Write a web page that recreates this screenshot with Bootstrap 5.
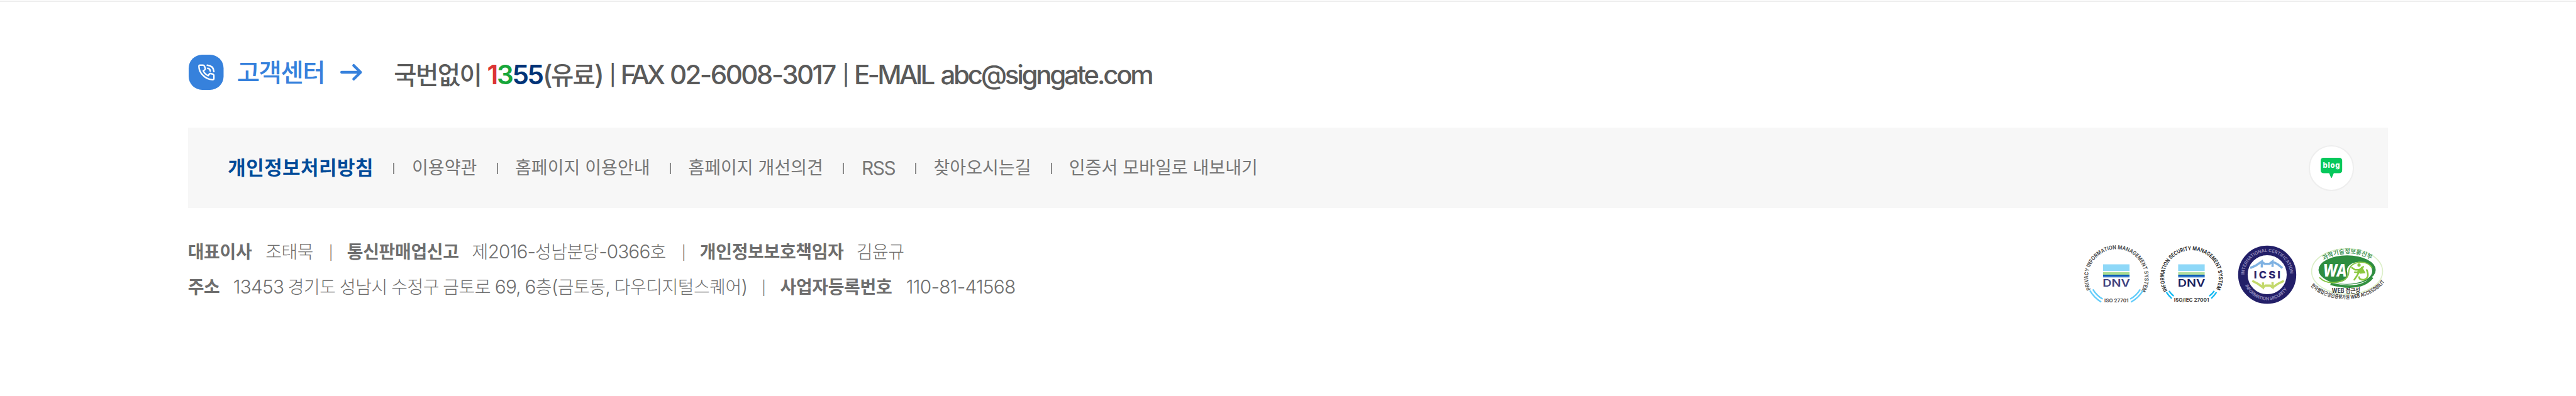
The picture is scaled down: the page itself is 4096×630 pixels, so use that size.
<!DOCTYPE html>
<html lang="ko">
<head>
<meta charset="utf-8">
<meta name="viewport" content="width=device-width, initial-scale=1">
<title>고객센터</title>
<link href="https://cdn.jsdelivr.net/npm/bootstrap@5.3.0/dist/css/bootstrap.min.css" rel="stylesheet">
<style>
body{font-family:Inter,"Noto Sans CJK KR",sans-serif;background:#fff;color:#767676;overflow:hidden}
svg{display:block;overflow:visible}
.topline{height:2px;margin-top:1px;background:#eee}
.inner{width:3498.6px;margin-left:298.7px}
/* customer centre */
.center-row{height:200.4px;padding-top:84px}
.tel-icon{width:55.5px;height:56px;margin-left:1.3px}
.center-title{width:164.3px;margin:-1.4px 0 0 21.3px;font-size:39.5px;font-weight:500;line-height:60px;letter-spacing:-1.5px;color:#3681dc}
.arrow{width:34.6px;height:26px;margin-top:14.9px}
.contact{display:grid;grid-template-columns:148.1px 88.5px 105.8px 18px 78.2px 274.5px 18.5px 137.5px 400px;align-items:baseline;margin:2.1px 0 0 50.7px;font-size:42.1px;font-weight:500;line-height:60px;color:#5a5a5a;white-space:nowrap}
.hangul{font-size:39.5px;letter-spacing:-1.65px}
.num{font-weight:600;letter-spacing:-2.3px}
.n-red{color:#dc3535}.n-green{color:#17a63a}.n-blue{color:#003478}
.paren{letter-spacing:-2.6px}
.fax{letter-spacing:-4.5px}
.faxno{letter-spacing:-2.6px}
.email-label{letter-spacing:-3.8px}
.email{letter-spacing:-3.3px}
.bar{font-size:32px;position:relative;top:-3px}
/* policy menu */
.policy{height:128px;background:#f7f7f7;padding:0 54px 0 63.5px}
.policy ul{grid-template-columns:263.3px 29.5px 135px 29px 246px 29.3px 246.2px 29.5px 85.5px 29px 187px 28.3px 320px;font-size:28.1px;color:#767676;white-space:nowrap}
.policy .main{font-size:31px;font-weight:700;letter-spacing:.45px;color:#004b99}
.policy .latin{font-size:29.8px;letter-spacing:-1.4px}
.tick{width:2px;height:18px;background:#8b8b8b;margin-top:1px}
.blog{width:72.3px;height:72.3px;border:2.1px solid #eee}
/* company details */
.company{margin-top:48.6px}
.info{display:grid;align-items:baseline;height:55.7px;font-size:29.8px;font-weight:300;letter-spacing:-.9px;line-height:40px;white-space:nowrap;word-spacing:-1px;color:#6e6e6e}
.info-1{grid-template-columns:123.5px 100.6px 29px 198.7px 333.2px 29.2px 249px 90px}
.info-2{grid-template-columns:72px 840.2px 29.6px 200.4px 200px;letter-spacing:-.75px}
.info b,.info i{font-size:28px;font-style:normal;letter-spacing:-.5px}
.info b{font-weight:700;letter-spacing:-.35px}
.info .sep{font-size:22px;position:relative;top:-1px}
.marks{margin:8.5px 4px 0 0}
</style>
<script src="https://cdn.jsdelivr.net/npm/bootstrap@5.3.0/dist/js/bootstrap.bundle.min.js"></script>
</head>
<body>
<div class="topline"></div>
<footer class="inner">
  <div class="center-row d-flex align-items-start">
    <svg class="tel-icon" viewBox="37 30 235 237"><rect x="37" y="30" width="235" height="237" rx="91" fill="#3681dc"/><g fill="none" stroke="#fff" stroke-width="10" stroke-linecap="round" stroke-linejoin="round"><path d="M112 101H134Q140 101 143 107L149 122Q150 128 145 132L135 139Q147 163 169 171L175 161Q179 156 185 157L202 162Q207 164 207 170V190Q207 199 197 199C145 195 107 151 106 110Q106 101 112 101Z"/><path d="M162 101Q203 103 207 144M165 122Q181 124 182 140"/></g></svg>
    <div class="center-title">고객센터</div>
    <svg class="arrow" viewBox="34 40 146 110"><path d="M43 95H170M124 49L171 95L124 141" fill="none" stroke="#3681dc" stroke-width="18" stroke-linecap="round" stroke-linejoin="round"/></svg>
    <div class="contact">
      <span class="hangul">국번없이</span>
      <span class="num"><span class="n-red">1</span><span class="n-green">3</span><span class="n-blue">55</span></span>
      <span class="paren">(<span class="hangul">유료</span>)</span>
      <span class="bar">|</span><span class="fax">FAX</span><span class="faxno">02-6008-3017</span>
      <span class="bar">|</span><span class="email-label">E-MAIL</span><span class="email">abc@signgate.com</span>
    </div>
  </div>
  <nav class="policy d-flex align-items-center justify-content-between">
    <ul class="d-grid align-items-center list-unstyled mb-0">
      <li class="main">개인정보처리방침</li><li class="tick"></li>
      <li>이용약관</li><li class="tick"></li>
      <li>홈페이지 이용안내</li><li class="tick"></li>
      <li>홈페이지 개선의견</li><li class="tick"></li>
      <li class="latin">RSS</li><li class="tick"></li>
      <li>찾아오시는길</li><li class="tick"></li>
      <li>인증서 모바일로 내보내기</li>
    </ul>
    <a class="blog rounded-circle bg-white d-flex justify-content-center align-items-center" href="#" aria-label="blog">
      <svg width="34.2" height="32.3" viewBox="201 255 144 136"><path d="M221 255H325Q345 255 345 275V338Q345 358 325 358H289L276 388Q273 393 270 388L258 358H221Q201 358 201 338V275Q201 255 221 255Z" fill="#06c85b"/><text x="216" y="323" textLength="114" font-family="Inter,sans-serif" font-weight="800" font-size="48" fill="#fff">blog</text></svg>
    </a>
  </nav>
  <div class="company d-flex justify-content-between align-items-start">
    <div>
      <div class="info info-1"><b>대표이사</b><i>조태묵</i><span class="sep">|</span><b>통신판매업신고</b><span><i>제</i>2016-<i>성남분당</i>-0366<i>호</i></span><span class="sep">|</span><b>개인정보보호책임자</b><i>김윤규</i></div>
      <div class="info info-2"><b>주소</b><span>13453 <i>경기도 성남시 수정구 금토로</i> 69, 6<i>층</i>(<i>금토동</i>, <i>다우디지털스퀘어</i>)</span><span class="sep">|</span><b>사업자등록번호</b><span>110-81-41568</span></div>
    </div>
    <div class="marks d-flex">
      <svg width="120" height="96" viewBox="58 50 506 405" font-family="Inter,sans-serif">
        <path id="ring1" d="M102 356A190 190 0 1 1 446 356" fill="none"/>
        <text font-size="37" font-weight="700" fill="#555"><textPath href="#ring1" textLength="775" lengthAdjust="spacingAndGlyphs">PRIVACY INFORMATION MANAGEMENT SYSTEM</textPath></text>
        <path d="M96 363Q124 412 172 440M116 355Q142 398 182 420M452 363Q424 412 372 440M434 355Q408 398 366 420" fill="none" stroke="#64cdfa" stroke-width="10"/>
        <path fill="#8ed8f8" d="M184 187H362V231H184z"/><path fill="#a9dd92" d="M184 240H362V257H184z"/><path fill="#0b5bbb" d="M184 257H362V270H184z"/><path fill="#86ade0" d="M184 270H362V276H184z"/>
        <text x="181" y="338" font-size="66" font-weight="600" textLength="184" lengthAdjust="spacingAndGlyphs" fill="#40427f">DNV</text>
        <text x="193" y="444" font-size="34" font-weight="700" textLength="162" lengthAdjust="spacingAndGlyphs" fill="#555">ISO 27701</text>
      </svg>
      <svg width="124" height="96" viewBox="564 50 523 405" font-family="Inter,sans-serif">
        <path id="ring2" d="M617 364A183 183 0 1 1 940 360" fill="none"/>
        <text font-size="37" font-weight="700" fill="#333"><textPath href="#ring2" textLength="748" lengthAdjust="spacingAndGlyphs">INFORMATION SECURITY MANAGEMENT SYSTEM</textPath></text>
        <path d="M609 374Q624 397 645 416M627 366Q640 386 658 400M945 374Q930 397 910 416M930 366Q917 386 897 400" fill="none" stroke="#18baf2" stroke-width="10"/>
        <path fill="#8ed8f8" d="M688 187H866V231H688z"/><path fill="#b3dfa0" d="M688 240H866V257H688z"/><path fill="#0b5bbb" d="M688 257H866V270H688z"/><path fill="#649cd8" d="M688 270H866V276H688z"/>
        <text x="685" y="338" font-size="66" font-weight="600" textLength="184" lengthAdjust="spacingAndGlyphs" fill="#17205f">DNV</text>
        <text x="660" y="437" font-size="34" font-weight="700" textLength="235" lengthAdjust="spacingAndGlyphs" fill="#444">ISO/IEC 27001</text>
      </svg>
      <svg width="115.5" height="96" viewBox="70 50 487 405" font-family="Inter,sans-serif">
        <circle cx="268" cy="257" r="163" fill="#fff" stroke="#231f68" stroke-width="64"/>
        <path id="ring3" d="M115 257A153 153 0 0 1 421 257" fill="none"/><path id="ring4" d="M113 310A163 171 0 0 0 423 310" fill="none"/>
        <g fill="#8b86b8" font-size="30" font-weight="700"><text><textPath href="#ring3" textLength="474" lengthAdjust="spacingAndGlyphs">INTERNATIONAL CERTIFICATION</textPath></text><text><textPath href="#ring4" startOffset="20" textLength="350">INFORMATION SECURITY</textPath></text></g>
        <path d="M154 212L190 196L232 168V208M232 168L250 184H284L304 168V205M304 168L340 188L370 212" fill="none" stroke="#7fb2e2" stroke-width="15"/>
        <path d="M168 298L206 318L240 342V308M240 342L256 330H288L304 342V306M304 342L340 318L380 298" fill="none" stroke="#c3d96b" stroke-width="15"/>
        <text x="179" y="281" font-size="70" font-weight="800" textLength="178" fill="#2a2670">ICSI</text>
      </svg>
      <svg width="120" height="96" viewBox="557 50 506 405" font-family="Inter,'Noto Sans CJK KR',sans-serif">
        <ellipse cx="806" cy="235" rx="238" ry="153" fill="#fff" stroke="#dcefc8" stroke-width="7"/>
        <path id="ring5" d="M650 160Q806 73 962 152" fill="none"/>
        <text font-size="42" font-weight="700" fill="#4b9a5e"><textPath href="#ring5" textLength="332" lengthAdjust="spacingAndGlyphs">과학기술정보통신부</textPath></text>
        <path d="M695 318Q900 370 975 275" fill="none" stroke="#32913f" stroke-width="17"/>
        <ellipse cx="806" cy="225" rx="192" ry="98" fill="#2e8d40"/>
        <path d="M806 235C792 160 966 142 974 228C979 298 850 334 714 313C805 307 815 278 806 235Z" fill="#fff"/>
        <path d="M620 275Q660 318 735 307Q815 296 817 240Q820 182 890 173Q950 170 974 212" fill="none" stroke="#82c341" stroke-width="8"/>
        <text x="643" y="268" font-size="116" font-weight="800" font-style="italic" textLength="162" lengthAdjust="spacingAndGlyphs" fill="#fff">WA</text>
        <g fill="none" stroke="#8cc83e" stroke-width="11" stroke-linecap="round"><path d="M838 210L860 224H888L914 204M886 225L907 242M884 242L872 264L854 290M884 242L858 240"/><path d="M938 225Q960 280 917 291Q890 292 886 273"/></g><circle cx="886" cy="192" r="11" fill="#8cc83e"/><path d="M873 232L906 202L930 246L894 250z" fill="#8cc83e"/>
        <text x="704" y="380" font-size="41" font-weight="700" textLength="190" lengthAdjust="spacingAndGlyphs" fill="#3b3936">WEB 접근성</text>
        <path id="ring6" d="M561 332C680 453 950 454 1060 302" fill="none"/>
        <text font-size="35" font-weight="700" fill="#4a4745"><textPath href="#ring6" textLength="575" lengthAdjust="spacingAndGlyphs">한국웹접근성인증평가원 WEB ACCESSIBILITY</textPath></text>
      </svg>
    </div>
  </div>
</footer>
</body>
</html>
